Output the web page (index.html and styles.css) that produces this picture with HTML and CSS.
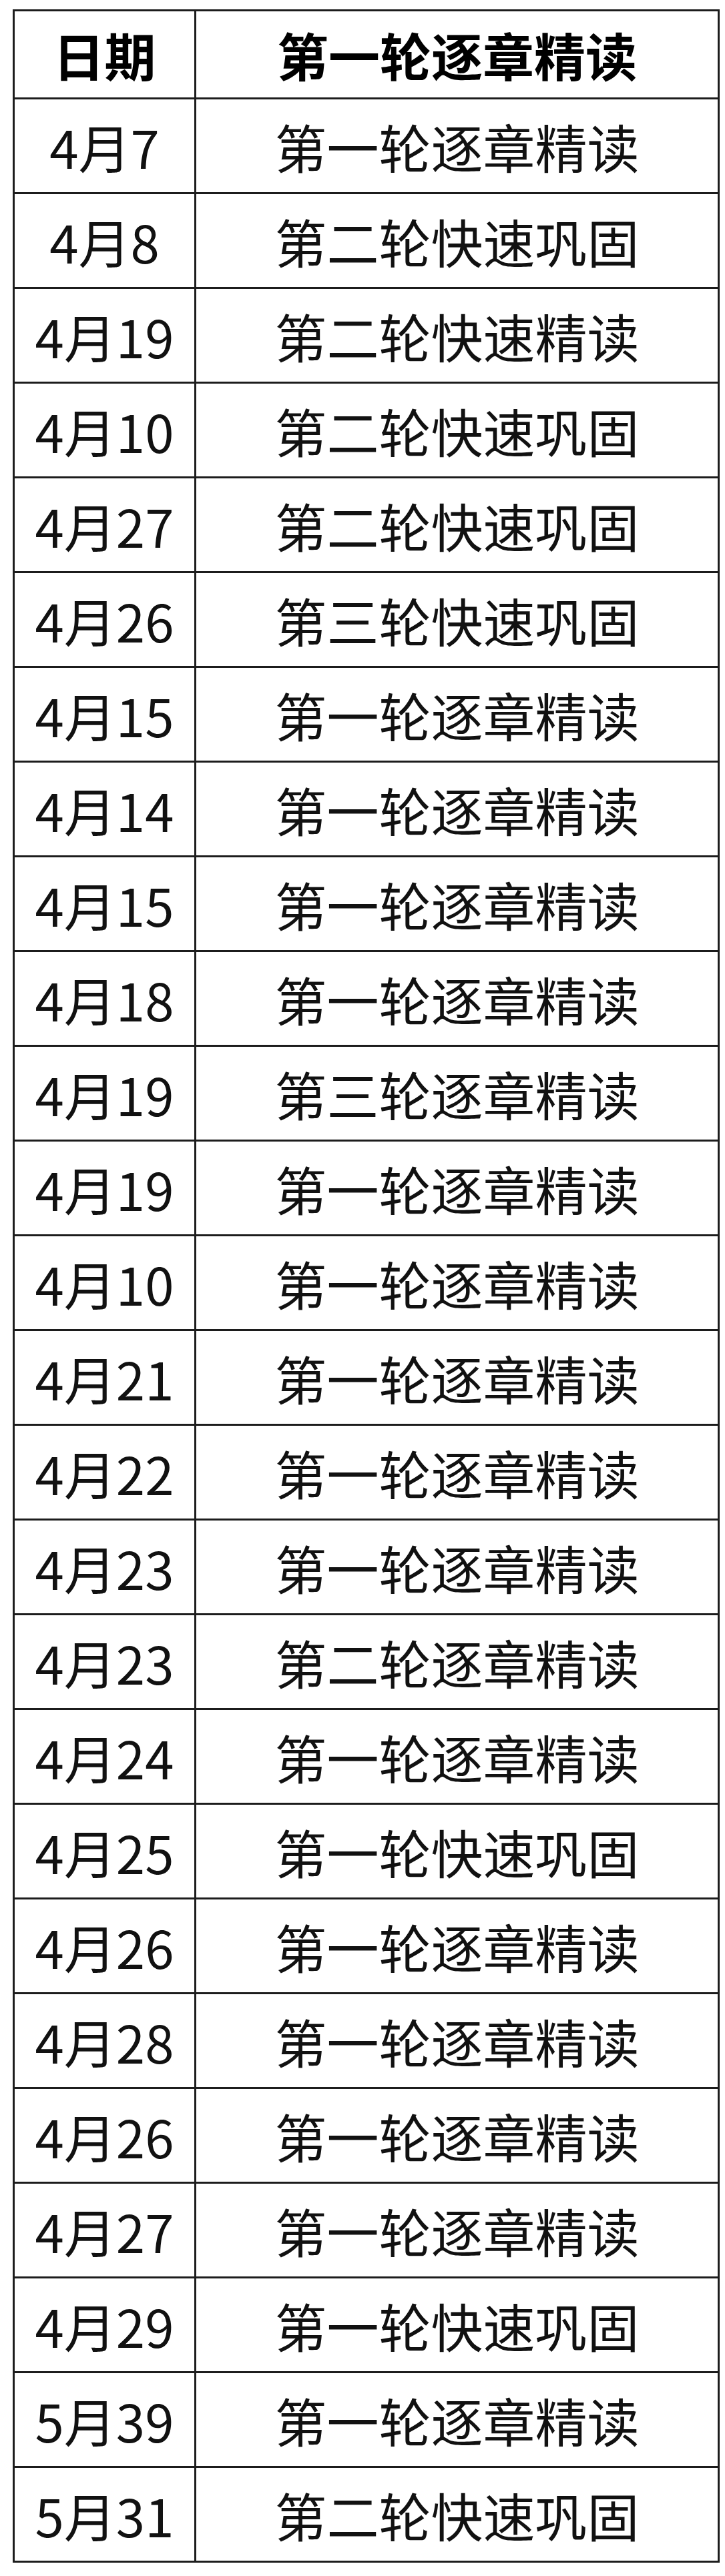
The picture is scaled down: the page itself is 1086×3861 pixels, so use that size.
FILE: index.html
```html
<!DOCTYPE html>
<html lang="zh-CN">
<head>
<meta charset="utf-8">
<title>日期</title>
<link rel="stylesheet" href="styles.css">
</head>
<body>
<table class="plan">
<thead>
<tr class="head"><th class="date">日期</th><th class="task">第一轮逐章精读</th></tr>
</thead>
<tbody>
<tr><td class="date">4月7</td><td class="task">第一轮逐章精读</td></tr>
<tr><td class="date">4月8</td><td class="task">第二轮快速巩固</td></tr>
<tr><td class="date">4月19</td><td class="task">第二轮快速精读</td></tr>
<tr><td class="date">4月10</td><td class="task">第二轮快速巩固</td></tr>
<tr><td class="date">4月27</td><td class="task">第二轮快速巩固</td></tr>
<tr><td class="date">4月26</td><td class="task">第三轮快速巩固</td></tr>
<tr><td class="date">4月15</td><td class="task">第一轮逐章精读</td></tr>
<tr><td class="date">4月14</td><td class="task">第一轮逐章精读</td></tr>
<tr><td class="date">4月15</td><td class="task">第一轮逐章精读</td></tr>
<tr><td class="date">4月18</td><td class="task">第一轮逐章精读</td></tr>
<tr><td class="date">4月19</td><td class="task">第三轮逐章精读</td></tr>
<tr><td class="date">4月19</td><td class="task">第一轮逐章精读</td></tr>
<tr><td class="date">4月10</td><td class="task">第一轮逐章精读</td></tr>
<tr><td class="date">4月21</td><td class="task">第一轮逐章精读</td></tr>
<tr><td class="date">4月22</td><td class="task">第一轮逐章精读</td></tr>
<tr><td class="date">4月23</td><td class="task">第一轮逐章精读</td></tr>
<tr><td class="date">4月23</td><td class="task">第二轮逐章精读</td></tr>
<tr><td class="date">4月24</td><td class="task">第一轮逐章精读</td></tr>
<tr><td class="date">4月25</td><td class="task">第一轮快速巩固</td></tr>
<tr><td class="date">4月26</td><td class="task">第一轮逐章精读</td></tr>
<tr><td class="date">4月28</td><td class="task">第一轮逐章精读</td></tr>
<tr><td class="date">4月26</td><td class="task">第一轮逐章精读</td></tr>
<tr><td class="date">4月27</td><td class="task">第一轮逐章精读</td></tr>
<tr><td class="date">4月29</td><td class="task">第一轮快速巩固</td></tr>
<tr><td class="date">5月39</td><td class="task">第一轮逐章精读</td></tr>
<tr><td class="date">5月31</td><td class="task">第二轮快速巩固</td></tr>
</tbody>
</table>
</body>
</html>
```

FILE: styles.css
```css
html, body {
  margin: 0;
  padding: 0;
  background: #ffffff;
}

body {
  padding: 14px 0 0 19px;
  font-family: "Noto Sans CJK SC", "Noto Sans", sans-serif;
  color: #111111;
}

.plan {
  border-collapse: collapse;
  width: 1059px;
  table-layout: fixed;
}

.plan th,
.plan td {
  border: 3px solid #1c1c1c;
  padding: 0;
  text-align: center;
  vertical-align: middle;
  font-size: 78px;
  line-height: 1;
  white-space: nowrap;
}

.plan th {
  font-weight: 700;
  font-size: 77px;
  color: #000000;
}

.plan td {
  font-weight: 400;
}

.plan .date {
  width: 269px;
}

.head {
  height: 132px;
}

.plan tbody tr {
  height: 142px;
}
```
